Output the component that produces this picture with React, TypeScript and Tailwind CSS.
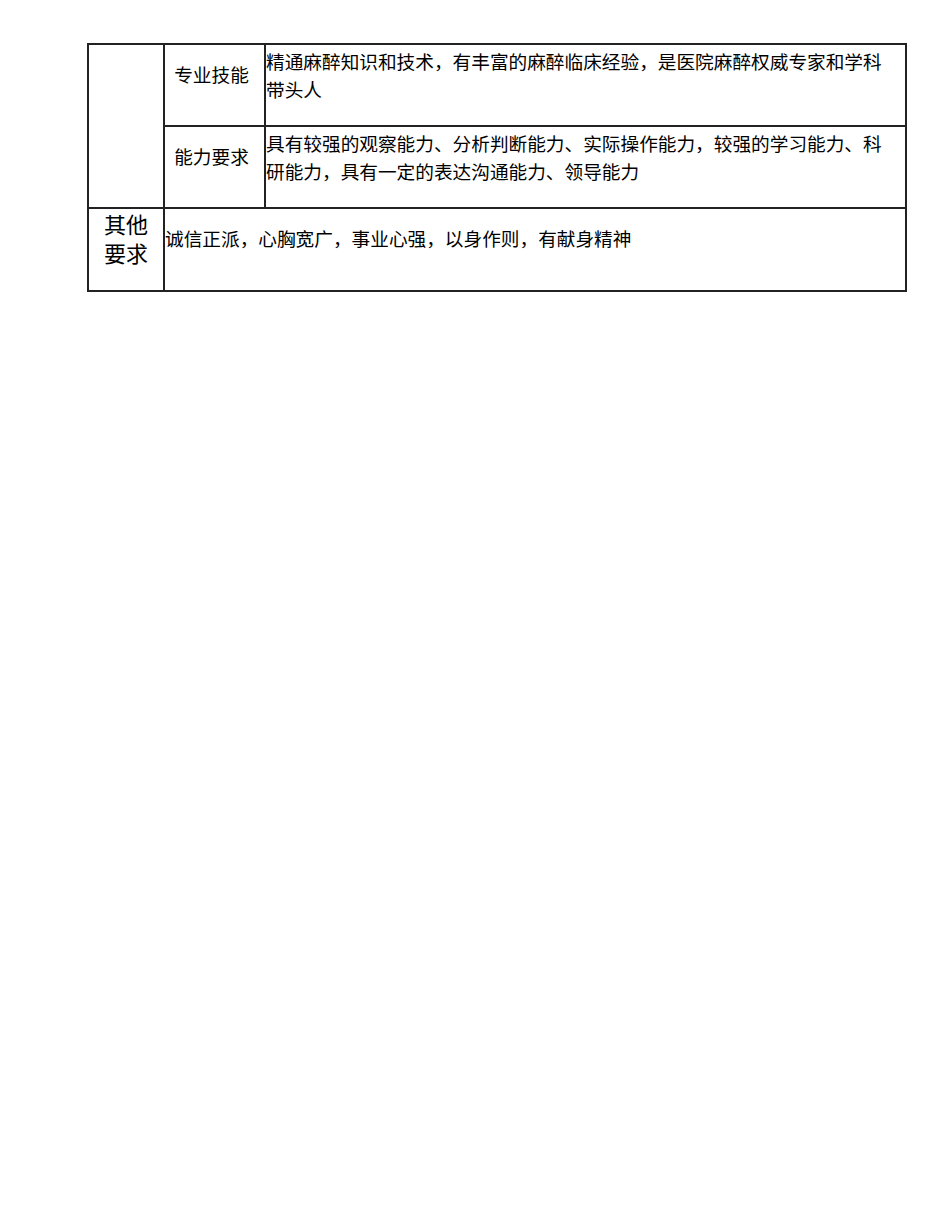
export default function App() {
  const cell = 'border-2 border-[#222] align-top p-0';

  return (
    <div
      className="min-h-[1230px] w-[950px] bg-white pl-[87px] pt-[43px] text-black"
      style={{ fontFamily: '"Noto Sans CJK SC", "Noto Sans", sans-serif' }}
    >
      <table className="w-[820px] table-fixed border-collapse text-[18.67px] leading-[28px]">
        <colgroup>
          <col className="w-[76px]" />
          <col className="w-[101px]" />
          <col />
        </colgroup>
        <tbody>
          <tr className="h-[82px]">
            <td rowSpan={2} className={cell}></td>
            <td className={`${cell} pt-[15px] pr-[6px] text-center`}>专业技能</td>
            <td className={`${cell} pt-[2px] pl-0 pr-[20px]`}>
              精通麻醉知识和技术，有丰富的麻醉临床经验，是医院麻醉权威专家和学科带头人
            </td>
          </tr>
          <tr className="h-[82px]">
            <td className={`${cell} pt-[15px] pr-[6px] text-center`}>能力要求</td>
            <td className={`${cell} pt-[2px] pl-0 pr-[20px]`}>
              具有较强的观察能力、分析判断能力、实际操作能力，较强的学习能力、科研能力，具有一定的表达沟通能力、领导能力
            </td>
          </tr>
          <tr className="h-[83px]">
            <td className={`${cell} pt-0 text-center text-[22px] leading-[29px]`}>
              其他
              <br />
              要求
            </td>
            <td colSpan={2} className={`${cell} pt-[15px] pl-0`}>
              诚信正派，心胸宽广，事业心强，以身作则，有献身精神
            </td>
          </tr>
        </tbody>
      </table>
    </div>
  );
}
